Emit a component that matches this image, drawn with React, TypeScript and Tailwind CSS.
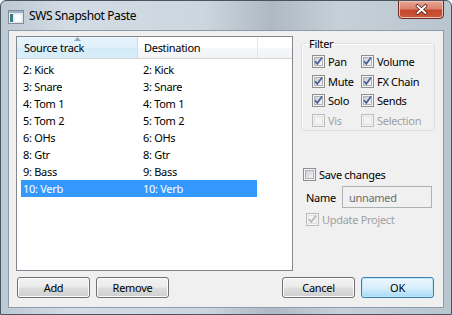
import React from "react";

const rows = [
  ["2: Kick", "2: Kick"],
  ["3: Snare", "3: Snare"],
  ["4: Tom 1", "4: Tom 1"],
  ["5: Tom 2", "5: Tom 2"],
  ["6: OHs", "6: OHs"],
  ["8: Gtr", "8: Gtr"],
  ["9: Bass", "9: Bass"],
  ["10: Verb", "10: Verb"],
];

function Check({ checked, disabled }: { checked?: boolean; disabled?: boolean }) {
  return (
    <span
      className={
        disabled
          ? "w-[13px] h-[13px] border border-[#bcbcbc] bg-[#f4f4f4] flex items-center justify-center shrink-0"
          : "w-[13px] h-[13px] border border-[#8e8f8f] bg-[#f4f4f4] flex items-center justify-center shrink-0"
      }
    >
      <span
        className={
          disabled
            ? "w-[9px] h-[9px] border border-[#e1e1e1] bg-[#f4f4f4] flex items-center justify-center"
            : "w-[9px] h-[9px] border border-[#aeb3b9] bg-gradient-to-br from-[#cbcfd5] to-[#f6f6f6] flex items-center justify-center"
        }
      >
        {checked && (
          <svg width="9" height="9" viewBox="0 0 9 9" className="overflow-visible">
            <path
              d="M1 4.2 L3.3 6.8 L8 0.6"
              fill="none"
              stroke={disabled ? "#b5b5b5" : "#4a5f97"}
              strokeWidth="1.7"
            />
          </svg>
        )}
      </span>
    </span>
  );
}

function CB({ label, checked, disabled, w }: { label: string; checked?: boolean; disabled?: boolean; w?: string }) {
  return (
    <div className={`flex items-center h-[19.5px] ${w ?? ""}`}>
      <Check checked={checked} disabled={disabled} />
      <span className={disabled ? "ml-[3px] text-[#a0a0a0]" : "ml-[3px] text-black"}>{label}</span>
    </div>
  );
}

function Btn({ label, def }: { label: string; def?: boolean }) {
  return (
    <div
      className={
        def
          ? "w-[73px] h-[21px] rounded-[3px] border border-[#3c7fb1] bg-gradient-to-b from-[#eaf6fd] via-[#d9f0fc] to-[#a7d9f5] flex items-center justify-center shadow-[inset_0_0_0_1px_#bfe6fa] text-black"
          : "w-[73px] h-[21px] rounded-[3px] border border-[#707070] bg-[linear-gradient(#f2f2f2_0%,#ebebeb_48%,#dddddd_52%,#cfcfcf_100%)] flex items-center justify-center shadow-[inset_0_0_0_1px_#fcfcfc] text-black"
      }
    >
      {label}
    </div>
  );
}

export default function App() {
  return (
    <div className="w-[452px] h-[315px] overflow-hidden relative rounded-t-[6px] border border-[#4a545e] bg-[linear-gradient(90deg,#bcc8d3_0%,#d3dce4_15%,#ccd6de_45%,#aeb9c3_60%,#c6d0d8_75%,#b9c5cf_100%)] font-['Noto_Sans',sans-serif] text-[11px] tracking-[-0.3px] leading-none">
      {/* title bar */}
      <div className="h-[29px] flex items-start">
        <svg width="16" height="14" viewBox="0 0 16 14" className="mt-[9px] ml-[7px] shrink-0">
          <rect x="0.5" y="0.5" width="15" height="13" fill="#e8eef3" stroke="#7f8b96" />
          <rect x="1" y="1" width="14" height="2" fill="#9fb2c4" />
          <rect x="2" y="4" width="3" height="8" fill="#3c7a8a" />
          <rect x="6" y="4" width="8" height="8" fill="#fbfdfe" stroke="#c7d1da" strokeWidth="0.5" />
        </svg>
        <div className="mt-[9px] ml-[5px] text-[12px] tracking-[-0.4px] text-black">SWS Snapshot Paste</div>
        <div className="flex-1" />
        <div className="w-[46px] h-[19px] mr-[7px] -mt-px rounded-b-[4px] border border-[#6e2a20] bg-[linear-gradient(#e7a696_0%,#d9836e_45%,#c8462b_55%,#c95a3a_100%)] shadow-[inset_0_0_0_1px_#f0c2b6] flex items-center justify-center">
          <svg width="13" height="11" viewBox="0 0 13 11">
            <path d="M2.5 2 L10.5 9 M10.5 2 L2.5 9" stroke="#5b2219" strokeWidth="3.6" strokeLinecap="round" />
            <path d="M2.5 2 L10.5 9 M10.5 2 L2.5 9" stroke="#ffffff" strokeWidth="1.9" strokeLinecap="round" />
          </svg>
        </div>
      </div>

      {/* client area */}
      <div className="mx-[7px] h-[278px] border border-[#8d9aa7] bg-[#f0f0f0] flex flex-col">
        <div className="flex items-start">
          {/* list */}
          <div className="ml-[7px] mt-[5px] w-[277px] h-[235px] border border-[#828790] bg-white flex flex-col">
            <div className="h-[22px] flex border-b border-[#d5d5d5] shrink-0">
              <div className="w-[121px] relative border-r border-[#c0dff2] bg-[linear-gradient(#e6f4fc_0%,#e0f1fb_50%,#d3ebf9_52%,#d8eef9_100%)] flex items-center pl-[7px] text-black">
                <svg width="7" height="4" viewBox="0 0 7 4" className="absolute left-[57px] top-0">
                  <path d="M0 4 L3.5 0 L7 4 Z" fill="#8ea7c0" />
                </svg>
                Source track
              </div>
              <div className="w-[120px] border-r border-[#e3e5e7] bg-[linear-gradient(#ffffff_0%,#ffffff_50%,#f6f7f8_52%,#f3f4f6_100%)] flex items-center pl-[6px] text-black">
                Destination
              </div>
              <div className="flex-1 bg-[linear-gradient(#ffffff_0%,#ffffff_50%,#f6f7f8_52%,#f3f4f6_100%)]" />
            </div>
            <div className="pt-[2px] pl-[4px] flex flex-col">
              {rows.map(([a, b], i) => (
                <div
                  key={i}
                  className={
                    i === rows.length - 1
                      ? "w-[236px] h-[17px] flex items-center bg-[#3399ff] text-white"
                      : "w-[236px] h-[17px] flex items-center text-black"
                  }
                >
                  <span className="w-[122px] pl-[2px]">{a}</span>
                  <span>{b}</span>
                </div>
              ))}
            </div>
          </div>

          {/* right panel */}
          <div className="ml-[8px] mt-[5px] w-[134px] flex flex-col">
            <fieldset className="border border-[#d5dfe5] rounded-[3px] shadow-[inset_1px_1px_0_#ffffff] pl-[10px] pt-[2px] pb-0">
              <legend className="ml-[-5px] px-[2px] h-[14px] flex items-center text-black">Filter</legend>
              <div className="flex">
                <CB label="Pan" checked w="w-[49px]" />
                <CB label="Volume" checked />
              </div>
              <div className="flex">
                <CB label="Mute" checked w="w-[49px]" />
                <CB label="FX Chain" checked />
              </div>
              <div className="flex">
                <CB label="Solo" checked w="w-[49px]" />
                <CB label="Sends" checked />
              </div>
              <div className="flex">
                <CB label="Vis" disabled w="w-[49px]" />
                <CB label="Selection" disabled />
              </div>
            </fieldset>

            <div className="mt-[35px] ml-[2px] flex items-center h-[16px]">
              <Check />
              <span className="ml-[3px] text-black">Save changes</span>
            </div>
            <div className="mt-[4px] ml-[5px] flex items-center h-[22px]">
              <span className="text-black w-[36px]">Name</span>
              <div className="w-[90px] h-[22px] border border-[#adb2b5] bg-[#f0f0f0] flex items-center pl-[6px] text-[#6d6d6d]">
                unnamed
              </div>
            </div>
            <div className="mt-[3px] ml-[5px] flex items-center h-[16px]">
              <Check checked disabled />
              <span className="ml-[3px] text-[#a0a0a0]">Update Project</span>
            </div>
          </div>
        </div>

        {/* buttons */}
        <div className="mt-[6px] pl-[8px] pr-[9px] flex gap-[6px]">
          <Btn label="Add" />
          <Btn label="Remove" />
          <div className="flex-1" />
          <Btn label="Cancel" />
          <Btn label="OK" def />
        </div>
      </div>
    </div>
  );
}
